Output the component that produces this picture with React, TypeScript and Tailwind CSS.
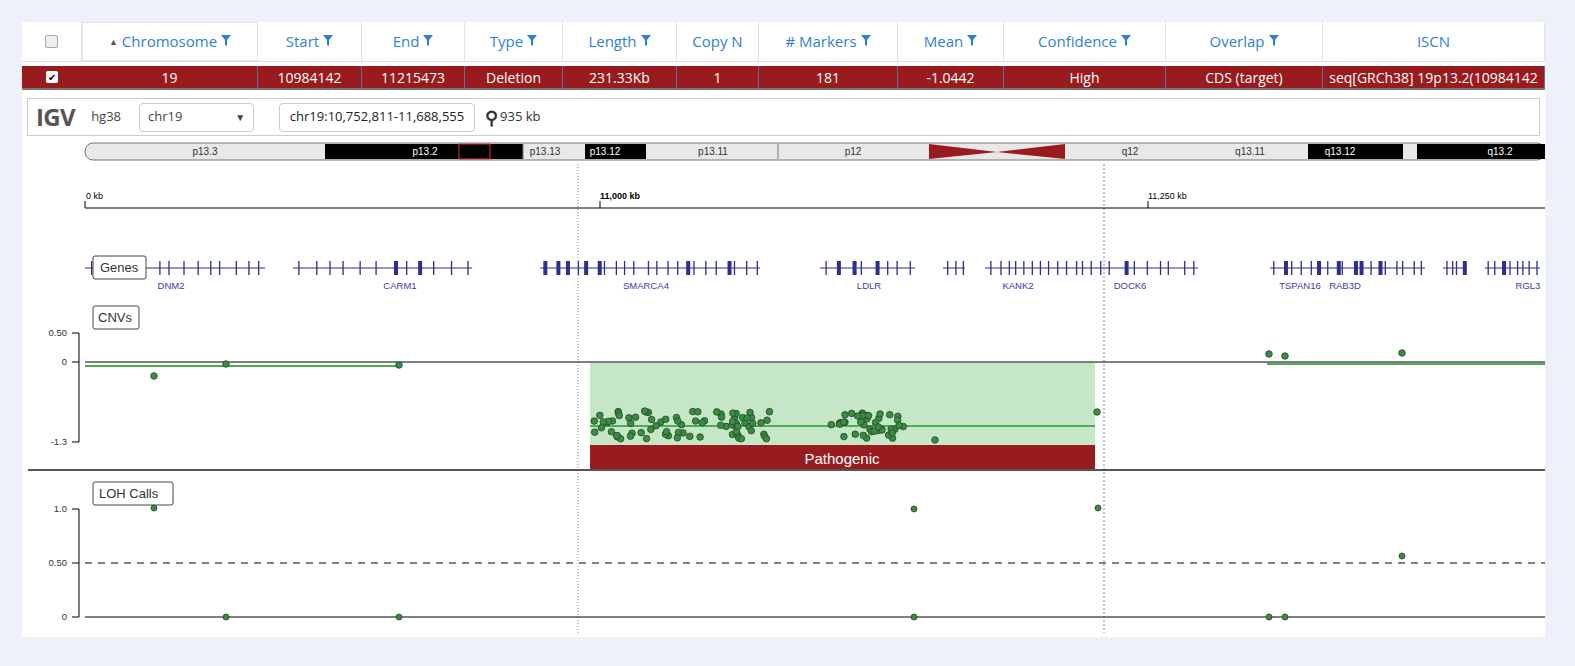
import React from "react";

const OX = 22, OY = 140;
const cols = [
  { w: 176, t: "Chromosome", v: "19", sort: true },
  { w: 104, t: "Start", v: "10984142" },
  { w: 103, t: "End", v: "11215473" },
  { w: 98, t: "Type", v: "Deletion" },
  { w: 114, t: "Length", v: "231.33Kb" },
  { w: 82, t: "Copy N", v: "1", nf: true },
  { w: 139, t: "# Markers", v: "181" },
  { w: 106, t: "Mean", v: "-1.0442" },
  { w: 162, t: "Confidence", v: "High" },
  { w: 157, t: "Overlap", v: "CDS (target)" },
  { w: 222, t: "ISCN", v: "seq[GRCh38] 19p13.2(10984142", nf: true },
];

const Funnel = () => (
  <svg width="10" height="11" viewBox="0 0 10 11" className="inline-block ml-1 -mt-0.5">
    <path d="M0 0h10L6 5v6L4 10V5z" fill="#2f7fd1" />
  </svg>
);

function rng(seed: number) {
  let s = seed;
  return () => { s = (s * 9301 + 49297) % 233280; return s / 233280; };
}
const r = rng(7);
const cnvDots: [number, number][] = [];
for (let i = 0; i < 120; i++) {
  let x = 592 + r() * 320;
  if (x > 770 && x < 840) x += 60;
  cnvDots.push([x, 415 + r() * 28]);
}

const genes: { x1: number; x2: number; n: number }[] = [
  { x1: 85, x2: 265, n: 14 }, { x1: 293, x2: 472, n: 12 }, { x1: 540, x2: 760, n: 22 },
  { x1: 820, x2: 915, n: 8 }, { x1: 943, x2: 965, n: 3 }, { x1: 985, x2: 1105, n: 14 },
  { x1: 1105, x2: 1198, n: 8 }, { x1: 1270, x2: 1425, n: 18 }, { x1: 1443, x2: 1465, n: 4 }, { x1: 1485, x2: 1540, n: 8 },
];

export default function App() {
  const gr = rng(3);
  return (
    <div className="w-[1575px] h-[666px] bg-[#eef1f9] pt-[22px] pl-[22px] overflow-hidden" style={{ fontFamily: '"Open Sans", "Liberation Sans", sans-serif' }}>
      <div className="w-[1523px] h-[615px] bg-white overflow-hidden">
        {/* header */}
        <div className="flex h-[40px] border-b border-[#ddd] text-[15px] text-[#2f7fd1]">
          <div className="w-[60px] flex items-center justify-center border-r border-[#e3e3e3]">
            <div className="w-[13px] h-[13px] rounded-[2px] border border-[#aaa] bg-[#eee]" />
          </div>
          {cols.map((c, i) => (
            <div key={i} className={`flex items-center justify-center whitespace-nowrap overflow-hidden border-r border-[#e3e3e3] ${c.sort ? "border border-[#5b8fd0]" : ""}`} style={{ width: c.w }}>
              {c.sort && <span className="text-[9px] mr-1 text-[#555]">▲</span>}
              {c.t}{!c.nf && <Funnel />}
            </div>
          ))}
        </div>
        <div className="h-[4px]" />
        <div className="flex h-[24px] bg-[#991b1e] text-white text-[14px] border-b-2 border-[#777]">
          <div className="w-[60px] flex items-center justify-center">
            <div className="w-[12px] h-[12px] bg-white rounded-[2px] flex items-center justify-center text-[10px] text-black leading-none">✔</div>
          </div>
          {cols.map((c, i) => (
            <div key={i} className="flex items-center justify-center whitespace-nowrap overflow-hidden border-r border-[#5a6fa0]" style={{ width: c.w }}>{c.v}</div>
          ))}
        </div>
        <div className="h-[8px]" />
        {/* IGV bar */}
        <div className="mx-[5px] h-[38px] border border-[#ccc] flex items-center text-[13px] text-[#444]">
          <span className="ml-[8px] text-[24px] font-bold text-[#555] tracking-tight">IGV</span>
          <span className="ml-[16px]">hg38</span>
          <div className="ml-[18px] w-[115px] h-[29px] border border-[#ccc] rounded flex items-center justify-between px-[8px]">
            <span>chr19</span><span className="text-[10px]">▼</span>
          </div>
          <div className="ml-[25px] w-[196px] h-[29px] border border-[#ccc] rounded flex items-center justify-center text-[#222]">chr19:10,752,811-11,688,555</div>
          <span className="ml-[10px] text-[18px] font-bold text-[#333]">⚲</span>
          <span className="ml-[2px] text-[#333]">935 kb</span>
        </div>
        {/* tracks */}
        <svg width="1523" height="497" viewBox={`${OX} ${OY} 1523 497`} style={{ fontFamily: '"Liberation Sans", sans-serif' }}>
          {/* ideogram */}
          <g fontSize="10" textAnchor="middle">
            <rect x="85" y="147" width="1460" height="17" rx="8" fill="#e8e8e8" stroke="#777" />
            <rect x="325" y="148" width="198" height="15" fill="#000" />
            <rect x="459" y="148" width="31" height="15" fill="none" stroke="#d33" />
            <rect x="585" y="148" width="61" height="15" fill="#000" />
            <polygon points="929,148 997,156 1065,148 1065,163 997,156 929,163" fill="#991b1e" />
            <rect x="1308" y="148" width="95" height="15" fill="#000" />
            <rect x="1417" y="148" width="128" height="15" fill="#000" />
            <line x1="523" y1="148" x2="523" y2="163" stroke="#777" />
            <line x1="778" y1="148" x2="778" y2="163" stroke="#777" />
            <text x="205" y="159" fill="#333">p13.3</text>
            <text x="425" y="159" fill="#fff">p13.2</text>
            <text x="545" y="159" fill="#333">p13.13</text>
            <text x="605" y="159" fill="#fff">p13.12</text>
            <text x="713" y="159" fill="#333">p13.11</text>
            <text x="853" y="159" fill="#333">p12</text>
            <text x="1130" y="159" fill="#333">q12</text>
            <text x="1250" y="159" fill="#333">q13.11</text>
            <text x="1340" y="159" fill="#fff">q13.12</text>
            <text x="1500" y="159" fill="#fff">q13.2</text>
          </g>
          {/* ruler */}
          <line x1="578" y1="168" x2="578" y2="637" stroke="#888" strokeDasharray="1 2" />
          <line x1="1104" y1="168" x2="1104" y2="637" stroke="#888" strokeDasharray="2 2" />
          <line x1="85" y1="212" x2="1545" y2="212" stroke="#000" />
          {[85, 600, 1148].map((x) => <line key={x} x1={x} y1="205" x2={x} y2="212" stroke="#000" />)}
          <g fontSize="9" fill="#000">
            <text x="86" y="203">0 kb</text>
            <text x="600" y="203" fontWeight="bold">11,000 kb</text>
            <text x="1148" y="203">11,250 kb</text>
          </g>
          {/* genes */}
          <g stroke="#2e2e8e" fill="#2e2e8e">
            {genes.map((g, i) => (
              <g key={i}>
                <line x1={g.x1} y1="272" x2={g.x2} y2="272" />
                {Array.from({ length: g.n }).map((_, k) => {
                  const x = g.x1 + ((k + 0.3 + gr() * 0.5) / g.n) * (g.x2 - g.x1);
                  const w = gr() > 0.8 ? 4 : 1.3;
                  return <rect key={k} x={x} y="265" width={w} height="14" stroke="none" />;
                })}
              </g>
            ))}
          </g>
          <g fontSize="9.5" fill="#3b3ba5" textAnchor="middle">
            <text x="171" y="293">DNM2</text><text x="400" y="293">CARM1</text><text x="646" y="293">SMARCA4</text>
            <text x="869" y="293">LDLR</text><text x="1018" y="293">KANK2</text><text x="1130" y="293">DOCK6</text>
            <text x="1300" y="293">TSPAN16</text><text x="1345" y="293">RAB3D</text><text x="1528" y="293">RGL3</text>
          </g>
          <rect x="93" y="260" width="53" height="23" rx="2" fill="#fff" stroke="#444" />
          <text x="100" y="276" fontSize="13" fill="#333">Genes</text>
          {/* CNV */}
          <rect x="93" y="310" width="46" height="23" rx="2" fill="#fff" stroke="#444" />
          <text x="98" y="326" fontSize="13" fill="#333">CNVs</text>
          <g fontSize="9.5" textAnchor="end" fill="#333">
            <text x="67" y="340">0.50</text><text x="67" y="369">0</text><text x="67" y="449">-1.3</text>
          </g>
          <path d="M72 337H79V446H72M72 366H79" stroke="#000" fill="none" />
          <line x1="85" y1="366" x2="1545" y2="366" stroke="#000" />
          <rect x="590" y="367" width="505" height="82" fill="#c6e6c8" />
          <rect x="590" y="449" width="505" height="25" fill="#991b1e" />
          <text x="842" y="468" fontSize="15" fill="#fff" textAnchor="middle">Pathogenic</text>
          <g stroke="#4caf50" strokeWidth="2">
            <line x1="85" y1="370" x2="400" y2="370" />
            <line x1="590" y1="430" x2="1095" y2="430" />
            <line x1="1267" y1="368" x2="1545" y2="368" />
          </g>
          <g fill="#3d8a45" stroke="#1f4d23" strokeWidth="0.8">
            {cnvDots.map(([x, y], i) => <circle key={i} cx={x} cy={y} r="3.3" />)}
            {[[154, 380], [226, 368], [399, 369], [935, 444], [1097, 416], [1269, 358], [1285, 360], [1402, 357]].map(([x, y], i) => <circle key={"e" + i} cx={x} cy={y} r="3.3" />)}
          </g>
          <line x1="28" y1="474" x2="1545" y2="474" stroke="#555" strokeWidth="2" />
          {/* LOH */}
          <rect x="93" y="486" width="80" height="23" rx="2" fill="#fff" stroke="#444" />
          <text x="99" y="502" fontSize="13" fill="#333">LOH Calls</text>
          <g fontSize="9.5" textAnchor="end" fill="#333">
            <text x="67" y="516">1.0</text><text x="67" y="570">0.50</text><text x="67" y="624">0</text>
          </g>
          <path d="M72 513H79V621H72M72 567H79" stroke="#000" fill="none" />
          <line x1="85" y1="567" x2="1545" y2="567" stroke="#000" strokeDasharray="7 6" />
          <line x1="85" y1="621" x2="1545" y2="621" stroke="#000" />
          <g fill="#3d8a45" stroke="#1f4d23" strokeWidth="0.8">
            {[[154, 512], [914, 513], [1098, 512], [1402, 560], [226, 621], [399, 621], [914, 621], [1269, 621], [1285, 621]].map(([x, y], i) => <circle key={i} cx={x} cy={y} r="3" />)}
          </g>
        </svg>
      </div>
    </div>
  );
}
